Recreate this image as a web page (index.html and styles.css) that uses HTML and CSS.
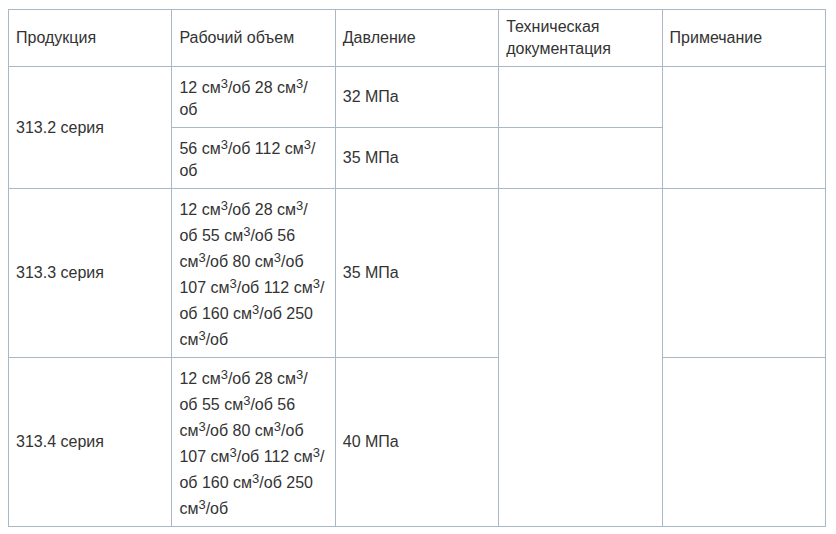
FILE: index.html
```html
<!DOCTYPE html>
<html lang="ru">
<head>
<meta charset="utf-8">
<title>Продукция</title>
<link rel="stylesheet" href="styles.css">
</head>
<body>
<table class="spec">
  <colgroup>
    <col class="c"><col class="c"><col class="c"><col class="c"><col class="c">
  </colgroup>
  <tr>
    <th>Продукция</th>
    <th>Рабочий объем</th>
    <th>Давление</th>
    <th>Техническая документация</th>
    <th>Примечание</th>
  </tr>
  <tr>
    <td rowspan="2">313.2 серия</td>
    <td class="vol">12 см<sup>3</sup>/об 28 см<sup>3</sup>/<br>об</td>
    <td>32 МПа</td>
    <td></td>
    <td rowspan="2"></td>
  </tr>
  <tr>
    <td class="vol">56 см<sup>3</sup>/об 112 см<sup>3</sup>/<br>об</td>
    <td>35 МПа</td>
    <td></td>
  </tr>
  <tr>
    <td>313.3 серия</td>
    <td class="vol">12 см<sup>3</sup>/об 28 см<sup>3</sup>/<br>об 55 см<sup>3</sup>/об 56<br>см<sup>3</sup>/об 80 см<sup>3</sup>/об<br>107 см<sup>3</sup>/об 112 см<sup>3</sup>/<br>об 160 см<sup>3</sup>/об 250<br>см<sup>3</sup>/об</td>
    <td>35 МПа</td>
    <td rowspan="2"></td>
    <td></td>
  </tr>
  <tr>
    <td>313.4 серия</td>
    <td class="vol">12 см<sup>3</sup>/об 28 см<sup>3</sup>/<br>об 55 см<sup>3</sup>/об 56<br>см<sup>3</sup>/об 80 см<sup>3</sup>/об<br>107 см<sup>3</sup>/об 112 см<sup>3</sup>/<br>об 160 см<sup>3</sup>/об 250<br>см<sup>3</sup>/об</td>
    <td>40 МПа</td>
    <td></td>
  </tr>
</table>
</body>
</html>
```
FILE: styles.css
```css
html { background: #fff; }
body {
  margin: 9px 8px 8px 8px;
  font-family: Arial, "Liberation Sans", sans-serif;
  font-size: 16px;
  color: #333;
}
.spec {
  border-collapse: collapse;
  table-layout: fixed;
  width: 818px;
}
.spec th,
.spec td {
  border: 1px solid #a9b8c6;
  padding: 6px 7px;
  line-height: 22px;
  vertical-align: middle;
  text-align: left;
  font-weight: normal;
}
.spec .vol {
  white-space: nowrap;
}
.spec sup {
  font-size: 13px;
  line-height: 22px;
  vertical-align: 5px;
}
```
